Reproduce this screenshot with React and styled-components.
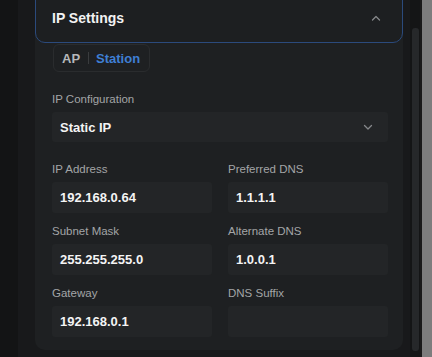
import React from 'react';
import styled, { createGlobalStyle } from 'styled-components';

const Global = createGlobalStyle`
  html, body {
    margin: 0;
    padding: 0;
    background: #131415;
    font-family: "Liberation Sans", Arial, sans-serif;
  }
`;

const Page = styled.div`
  display: flex;
  height: 357px;
  width: 432px;
  overflow: hidden;
`;

const Gutter = styled.div`
  width: 18px;
  background: #131415;
`;

const Panel = styled.div`
  width: 392px;
  background: #18191b;
  display: flex;
  padding-left: 17px;
  box-sizing: border-box;
`;

const Column = styled.div`
  width: 368px;
  display: flex;
  flex-direction: column;
`;

const Scroll = styled.div`
  width: 10px;
  background: #141516;
  display: flex;
  justify-content: center;
  padding-top: 28px;
  padding-bottom: 6px;
  box-sizing: border-box;
`;

const Thumb = styled.div`
  width: 7px;
  background: #26282a;
  border-radius: 3px;
`;

const Edge = styled.div`
  flex: 1;
  background: #7d7d7d;
  border-left: 2px solid #1a1a1a;
`;

const Card = styled.div`
  margin-top: -11px;
  background: #1e2022;
  border-radius: 10px;
  height: 361px;
  flex-shrink: 0;
  display: flex;
  flex-direction: column;
`;

const Header = styled.div`
  height: 54px;
  box-sizing: border-box;
  border: 1.5px solid #2b4a7c;
  border-radius: 10px;
  background: #1d1f21;
  display: flex;
  align-items: center;
  justify-content: space-between;
  padding: 4px 20px 0 16px;
  color: #f2f2f2;
  font-weight: bold;
  font-size: 14px;
`;

const Body = styled.div`
  padding: 1px 15px 0 17px;
  display: flex;
  flex-direction: column;
`;

const Segmented = styled.div`
  align-self: flex-start;
  display: flex;
  align-items: center;
  height: 28px;
  box-sizing: border-box;
  border: 1px solid #2a2c2e;
  border-radius: 6px;
  padding: 0 9px 0 8px;
  margin-left: 1px;
  font-weight: bold;
  font-size: 13px;
`;

const Seg = styled.span`
  color: ${(p) => (p.$active ? '#3f7fd4' : '#b5b7b9')};
`;

const Divider = styled.span`
  width: 1px;
  height: 12px;
  background: #3a3c3e;
  margin: 0 7px 0 8px;
`;

const Label = styled.div`
  color: #a3a5a7;
  font-size: 11.5px;
  height: 14px;
  line-height: 14px;
  margin-bottom: 6px;
`;

const Select = styled.div`
  height: 30px;
  background: #232527;
  border-radius: 3px;
  display: flex;
  align-items: center;
  justify-content: space-between;
  padding: 0 14px 0 8px;
  color: #f4f4f4;
  font-weight: bold;
  font-size: 13px;
`;

const Grid = styled.div`
  display: grid;
  grid-template-columns: 160px 160px;
  column-gap: 16px;
  row-gap: 11px;
  margin-top: 20px;
`;

const Field = styled.div`
  display: flex;
  flex-direction: column;
`;

const Input = styled.div`
  height: 31px;
  background: #232527;
  border-radius: 3px;
  display: flex;
  align-items: center;
  padding: 0 8px;
  color: #f4f4f4;
  font-weight: bold;
  font-size: 13px;
`;

const Block = styled.div`
  margin-top: ${(p) => p.$top || 0}px;
`;

const Chevron = ({ up, color }) => (
  <svg width="12" height="8" viewBox="0 0 12 8" fill="none">
    <path
      d={up ? 'M2.5 6 L6 2.5 L9.5 6' : 'M2.5 2.5 L6 6 L9.5 2.5'}
      stroke={color}
      strokeWidth="1.3"
      strokeLinecap="round"
      strokeLinejoin="round"
    />
  </svg>
);

const fields = [
  ['IP Address', '192.168.0.64'],
  ['Preferred DNS', '1.1.1.1'],
  ['Subnet Mask', '255.255.255.0'],
  ['Alternate DNS', '1.0.0.1'],
  ['Gateway', '192.168.0.1'],
  ['DNS Suffix', ''],
];

const App = () => (
  <>
    <Global />
    <Page>
      <Gutter />
      <Panel>
        <Column>
          <Card>
            <Header>
              <span>IP Settings</span>
              <Chevron up color="#85878a" />
            </Header>
            <Body>
              <Segmented>
                <Seg>AP</Seg>
                <Divider />
                <Seg $active>Station</Seg>
              </Segmented>
              <Block $top={20}>
                <Label>IP Configuration</Label>
                <Select>
                  <span>Static IP</span>
                  <Chevron color="#85878a" />
                </Select>
              </Block>
              <Grid>
                {fields.map(([label, value]) => (
                  <Field key={label}>
                    <Label>{label}</Label>
                    <Input>{value}</Input>
                  </Field>
                ))}
              </Grid>
            </Body>
          </Card>
        </Column>
      </Panel>
      <Scroll>
        <Thumb />
      </Scroll>
      <Edge />
    </Page>
  </>
);

export default App;
